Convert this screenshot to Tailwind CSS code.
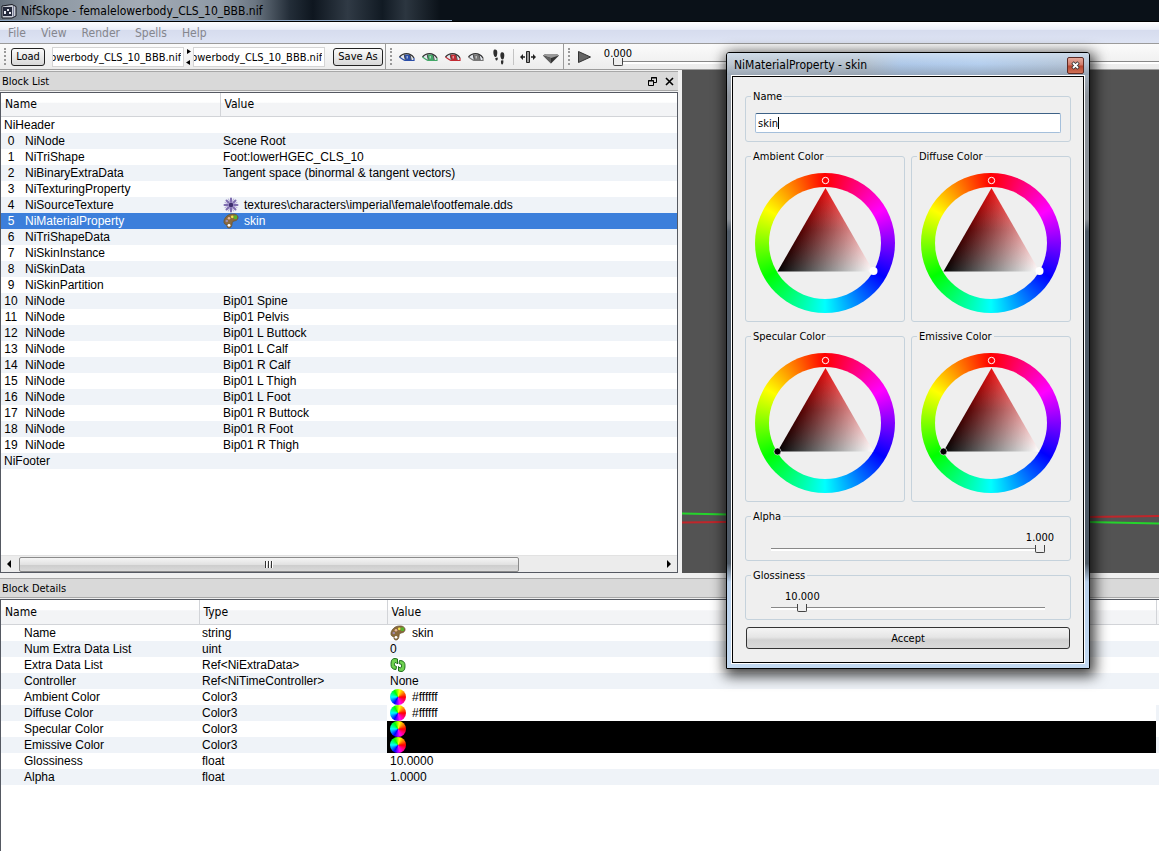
<!DOCTYPE html>
<html lang="en">
<head>
  <meta charset="UTF-8">
  <meta name="viewport" content="width=device-width, initial-scale=1.0">
  <title>NifSkope - femalelowerbody_CLS_10_BBB.nif</title>
  <script src="https://cdn.jsdelivr.net/npm/@tailwindcss/browser@4"></script>
</head>
<body class="h-screen flex flex-col overflow-hidden bg-[#f0f0f0] text-black text-[11px] leading-4 font-['DejaVu_Sans_Condensed','DejaVu_Sans',sans-serif]">

  <!-- Shared icons -->
  <svg class="hidden">
    <symbol id="eye" viewBox="0 0 16 12">
      <path d="M1 6C4 2 11 1 15 7L14.500 9.500H6.500C4 9 2.500 7.800 1 6Z" fill="#e4e8ee" />
      <path d="M5.500 3.500h5.500L12 9H7C5.500 7.500 5 5.500 5.500 3.500Z" fill="currentColor" />
      <path d="M7.500 5h1.500v2.500H7.500z" fill="#fff" opacity=".5" />
      <path d="M.5 6C4 1.800 11 1 15 7" fill="none" stroke="#333" stroke-width="1.300" />
      <path d="M.5 6C3 8 5 9.500 7 9.500h8V7" fill="none" stroke="currentColor" stroke-width="1.200" />
      <path d="M5.200 3.500 6.300 9M11 3.500 12.300 9" fill="none" stroke="#333" stroke-width=".8" />
    </symbol>
    <symbol id="palette" viewBox="0 0 16 16">
      <path d="M1 8C1.500 4.500 5 1 9.500 1c3.500-.3 5.800 1.500 5.500 4-.3 2-2 2.700-4 3-1.800.3-1.800 1.500-2 3-.2 2-.8 4-3 4S4 13 4 11.800C2 11.500.7 10.500 1 8Z" fill="#8a6a3c" stroke="#6b5330" stroke-width=".8" />
      <circle cx="3.800" cy="8" r="1.300" fill="#a08aa8" />
      <circle cx="6" cy="5.200" r="1.300" fill="#e9b79a" />
      <circle cx="9.300" cy="3.800" r="1.400" fill="#f3e04a" />
      <path d="M10.500 2.500h3.500v3.500h-3z" fill="#58b32b" />
      <circle cx="6" cy="12.300" r="1.400" fill="#fff" />
    </symbol>
    <symbol id="flower" viewBox="0 0 16 16">
      <g stroke="#7d6cae" stroke-width="2" stroke-linecap="round">
        <path d="M8 1.500v13M1.500 8h13M3.500 3.500l9 9M12.500 3.500l-9 9" />
      </g>
      <g stroke="#b3a8d6" stroke-width="1" stroke-linecap="round">
        <path d="M5.500 2l5 12M10.500 2l-5 12M2 5.500l12 5M2 10.500l12-5" />
      </g>
      <circle cx="8" cy="8" r="2.200" fill="#3d2f6d" />
    </symbol>
    <symbol id="reload" viewBox="0 0 16 16">
      <path id="half" d="M1 7.500C1 3.500 2 1.500 5 1.500L7.500 2V7L6 5.500C4.500 5.500 4.300 6.500 4.500 8.500L6.500 9.500 6 12.500C2.500 12.500 1 10.500 1 7.500Z" fill="#6fd350" stroke="#1d6e1d" />
      <path d="M15 8.500C15 12.500 14 14.500 11 14.500L8.500 14V9.500L10 11C11.500 11 11.700 9.500 11.500 7.500L9 6.500 9.500 3.500C13.500 3.500 15 5.500 15 8.500Z" fill="#6fd350" stroke="#1d6e1d" />
    </symbol>
  </svg>

  <!-- Title bar -->
  <header class="relative h-[22px] shrink-0 flex items-center gap-1 pl-px border-b border-black bg-[linear-gradient(90deg,#66717d,#8d98a3_4%,#a3abb5_12%,#8e99a5_19%,#6b7682_22%,#232d38_25%,#0e161f_27%,#303a45_30%,#111a23_33%,#2c3640_35%,#0a1118_38%)]">
    <svg class="size-4" viewBox="0 0 16 16">
      <path d="M1 3l10-1.500 4 2V13l-4 2H1z" fill="#c9cdd6" stroke="#15171f" />
      <path d="M2 4h9v9H2z" fill="#252a3c" />
      <path d="M3 8h2v3H3zM6 6h2v2H6zM8 9h2v2H8z" fill="#e8eaf2" />
      <path d="M12.500 3v11" stroke="#7b7f99" />
    </svg>
    <h1 class="text-[12px]">NifSkope - femalelowerbody_CLS_10_BBB.nif</h1>
    <div class="absolute bottom-0 left-0 w-[39%] h-px bg-[#8ea6c4]"></div>
  </header>

  <!-- Menu -->
  <nav class="h-[21px] shrink-0 flex items-center gap-[15px] px-2 text-[12px] text-[#85868d] bg-[linear-gradient(#fdfdfe,#eceff8_35%,#d6dcee_40%,#dee4f4)]">
    <a href="#">File</a>
    <a href="#">View</a>
    <a href="#">Render</a>
    <a href="#">Spells</a>
    <a href="#">Help</a>
  </nav>

  <!-- Toolbar -->
  <div class="h-[27px] shrink-0 flex items-center border-y border-[#9b9b9b] bg-[linear-gradient(#fbfbfb,#ececec)]">
    <div class="w-[3px] h-[17px] ml-1 mr-1 border-l-2 border-dotted border-[#999]"></div>
    <button class="w-[34px] h-[18px] pt-px leading-3 border border-[#222] rounded-[3px] bg-[linear-gradient(#fafafa,#d8d8d8)]">Load</button>
    <input aria-label="Load file" class="file w-[132px] h-5 ml-[7px] pt-px pr-[2px] bg-white border border-[#d5d5d5] outline-none" value="C:\meshes\femalelowerbody_CLS_10_BBB.nif">
    <svg class="w-[5px] h-4 mx-[2px]" viewBox="0 0 5 16"><path d="M1 0v5l4-2.500zM4 11v5L0 13.500z" /></svg>
    <input aria-label="Save file" class="file w-[132px] h-5 pt-px pr-[2px] bg-white border border-[#d5d5d5] outline-none" value="C:\meshes\femalelowerbody_CLS_10_BBB.nif">
    <button class="w-[50px] h-[18px] ml-2 pt-px leading-3 border border-[#222] rounded-[3px] bg-[linear-gradient(#fafafa,#d8d8d8)]">Save As</button>
    <div class="w-px h-full ml-[2px] bg-[#9b9b9b]"></div>
    <div class="w-[3px] h-[17px] ml-1 border-l-2 border-dotted border-[#999]"></div>
    <div class="flex items-center gap-[7px] ml-[6px]">
      <button aria-label="Draw axes" class="text-[#2b4ea8]"><svg class="w-4 h-3"><use href="#eye" /></svg></button>
      <button aria-label="Draw nodes" class="text-[#43a868]"><svg class="w-4 h-3"><use href="#eye" /></svg></button>
      <button aria-label="Draw havok" class="text-[#c22a33]"><svg class="w-4 h-3"><use href="#eye" /></svg></button>
      <button aria-label="Show hidden" class="text-[#777]"><svg class="w-4 h-3"><use href="#eye" /></svg></button>
      <button aria-label="Walk">
        <svg class="size-4" viewBox="0 0 16 16" fill="#2e2e2e">
          <path d="M3 .800c2-.8 3.400.5 3.300 2.900C6.200 6 5.800 8.200 4.300 8 2.700 7.700 1.600 2.500 3 .800ZM4.300 9l2.400-.4c.3 1.900-.3 3-1.100 3s-1.300-1.100-1.300-2.600Z" />
          <path d="M10 3.700c1.900-1 3.400 0 3.300 2.800-.1 2.200-.6 4.100-1.900 4C9.700 10.300 8.600 5.500 10 3.700ZM10 11.500l2.300-.3c.3 2.300-.2 4.300-1.200 4.300s-1.300-2-1.100-4Z" />
        </svg>
      </button>
    </div>
    <div class="w-px h-4 ml-[6px] bg-[#c4c4c4]"></div>
    <button aria-label="Flip view" class="ml-[6px]">
      <svg class="size-4" viewBox="0 0 16 16">
        <path d="M6.500 2.500h3v11h-3z" fill="#999" stroke="#222" />
        <path d="M0 8l3-3v2.300h2v1.400H3V11zM16 8l-3-3v2.300h-2v1.400h2V11z" fill="#222" />
      </svg>
    </button>
    <button aria-label="Perspective" class="ml-[7px]">
      <svg class="size-4" viewBox="0 0 16 16">
        <path d="M0 6.500 2.500 5h11L16 6.500 8 14.500z" fill="#333" />
        <path d="M0 6.500 2.500 5h11L16 6.500 8 9z" fill="#999" />
        <path d="M0 6.500 8 9v5.500z" fill="#606060" />
      </svg>
    </button>
    <div class="w-px h-full ml-1 bg-[#9b9b9b]"></div>
    <div class="w-[3px] h-[17px] ml-1 border-l-2 border-dotted border-[#999]"></div>
    <button aria-label="Play" class="ml-[7px]">
      <svg class="w-[13px] h-3" viewBox="0 0 13 12"><path d="M.5.500v11L12.500 6z" fill="#666" stroke="#333" /></svg>
    </button>
    <div class="relative flex-1 ml-[22px] pt-3">
      <output class="absolute left-[5px] bottom-2 -translate-x-1/2 leading-3">0.000</output>
      <input type="range" aria-label="Time" min="0" max="1" step="0.001" value="0" class="block w-full h-[10px] appearance-none bg-transparent [&::-webkit-slider-runnable-track]:h-[3px] [&::-webkit-slider-runnable-track]:border-t [&::-webkit-slider-runnable-track]:border-[#888] [&::-webkit-slider-runnable-track]:bg-white [&::-webkit-slider-thumb]:appearance-none [&::-webkit-slider-thumb]:w-[10px] [&::-webkit-slider-thumb]:h-2 [&::-webkit-slider-thumb]:-mt-1 [&::-webkit-slider-thumb]:border [&::-webkit-slider-thumb]:border-t-0 [&::-webkit-slider-thumb]:border-[#444] [&::-webkit-slider-thumb]:rounded-b-[2px] [&::-webkit-slider-thumb]:bg-[#eee]">
    </div>
  </div>

  <!-- Block list and viewport -->
  <main class="flex-[503] min-h-0 flex">
    <section class="w-[58.5%] flex flex-col">
      <div class="h-5 shrink-0 mt-px mb-px pt-px flex items-center justify-between pl-[2px] pr-1 border-y border-[#a8a8a8] bg-[#d9d9d9]">
        <h2>Block List</h2>
        <div class="flex items-center gap-2">
          <button aria-label="Float"><svg class="size-[9px]" viewBox="0 0 9 9" fill="none" stroke="#000"><path d="M3.500 3V.5h5v5H6M3 1h6M.5 3.500h5v5h-5zM0 4h6" /></svg></button>
          <button aria-label="Close"><svg class="size-[9px]" viewBox="0 0 9 9" stroke="#000" stroke-width="1.600"><path d="M1 1l7 7M8 1 1 8" /></svg></button>
        </div>
      </div>
      <div class="flex-1 min-h-0 flex flex-col border border-[#555962] bg-white">
        <table class="w-full table-fixed border-collapse text-left font-['Liberation_Sans',Arial,sans-serif] text-[12px]">
          <thead class="font-['DejaVu_Sans_Condensed','DejaVu_Sans',sans-serif]">
            <tr class="h-[23px] bg-[linear-gradient(#fff_40%,#f3f4f6_45%,#f3f4f6)]">
              <th class="w-[219px] pl-1 p-0 font-normal border-b border-r border-[#d2d4d8]">Name</th>
              <th class="pl-1 p-0 font-normal border-b border-[#d2d4d8]">Value</th>
            </tr>
          </thead>
          <tbody id="blocks"></tbody>
        </table>
        <!-- Horizontal scrollbar -->
        <div class="h-[17px] shrink-0 mt-auto flex items-center bg-[#ececec] border-t border-[#e2e2e2]">
          <svg class="w-[18px] h-2" viewBox="0 0 18 8"><path d="M10 0v8L6 4z" /></svg>
          <div class="w-[74%] h-[15px] flex items-center justify-center gap-px border border-[#8b8b8b] rounded-[2px] bg-[linear-gradient(#f5f5f5,#e2e2e2_50%,#cdcdcd_55%,#d9d9d9)]">
            <i class="w-[2px] h-[7px] border-l border-[#333] bg-white"></i>
            <i class="w-[2px] h-[7px] border-l border-[#333] bg-white"></i>
            <i class="w-[2px] h-[7px] border-l border-[#333] bg-white"></i>
          </div>
          <svg class="w-[18px] h-2 ml-auto" viewBox="0 0 18 8"><path d="M8 0v8l4-4z" /></svg>
        </div>
      </div>
    </section>
    <svg class="flex-1 h-full ml-1 bg-[#535353]" viewBox="0 0 477 503" preserveAspectRatio="none" fill="none" stroke-width="2">
      <path d="M0 452.500 477 446" stroke="#c0262b" />
      <path d="M0 443.500 477 453.500" stroke="#25d32c" />
    </svg>
  </main>

  <!-- Block details -->
  <section class="flex-[273] min-h-0 flex flex-col pt-[5px]">
    <div class="h-5 shrink-0 mb-px pt-px flex items-center pl-[2px] border-y border-[#a8a8a8] bg-[#d9d9d9]">
      <h2>Block Details</h2>
    </div>
    <div class="flex-1 min-h-0 border-t border-l border-[#555962] bg-white">
      <table class="w-full table-fixed border-collapse text-left font-['Liberation_Sans',Arial,sans-serif] text-[12px]">
        <thead class="font-['DejaVu_Sans_Condensed','DejaVu_Sans',sans-serif]">
          <tr class="h-6 bg-[linear-gradient(#fff_40%,#f3f4f6_45%,#f3f4f6)]">
            <th class="w-[198px] pl-1 p-0 font-normal border-b border-r border-[#d2d4d8]">Name</th>
            <th class="w-[188px] pl-1 p-0 font-normal border-b border-r border-[#d2d4d8]">Type</th>
            <th class="pl-1 p-0 font-normal border-b border-r border-[#d2d4d8]">Value</th>
            <th class="w-[3px] p-0 border-b border-[#d2d4d8]"></th>
          </tr>
        </thead>
        <tbody id="details"></tbody>
      </table>
    </div>
  </section>

  <!-- Material dialog -->
  <div role="dialog" aria-labelledby="dialogTitle" class="absolute left-[726px] top-[52px] w-[364px] px-1 pb-1 border border-black rounded-t-[3px] shadow-[2px_4px_14px_3px_rgba(0,0,0,0.75)] bg-[linear-gradient(#b5c5d6,#8f959d_7%,#8d9299_27%,#505b67_29%,#505b67_83%,#b9d0ea_86%,#c3d9f1)]">
    <div class="h-[22px] -mx-1 pl-[7px] pr-[5px] flex items-center justify-between rounded-t-[2px] bg-[linear-gradient(#d9e6f4aa,#ffffff00_50%,#7f8c9c88),linear-gradient(90deg,#bdc7d1,#b3bfcb_38%,#aec8e8_48%,#b5cfee_70%,#b4c2d2)]">
      <h2 id="dialogTitle" class="pt-[2px] text-[12px]">NiMaterialProperty - skin</h2>
      <button aria-label="Close dialog" class="w-[17px] h-[17px] mt-[2px] flex items-center justify-center border border-[#5c2a24] rounded-[2px] bg-[linear-gradient(#e5a99b,#cf7867_48%,#b5442f_52%,#cf7055)]">
        <svg class="size-[9px]" viewBox="0 0 9 9"><path d="M1.500 1.500l6 6M7.500 1.500l-6 6" stroke="#333" stroke-width="3.400" /><path d="M2 2l5 5M7 2 2 7" stroke="#fff" stroke-width="1.800" /></svg>
      </button>
    </div>
    <div class="border border-white">
      <form class="flex flex-col gap-[7px] p-3 pb-[13px] border border-black bg-[#efefef]">
        <fieldset class="px-[9px] pt-[10px] pb-2 border border-[#c5d2dc] rounded-[3px]">
          <legend class="ml-[-4px] px-[2px] pt-[2px] leading-3"><label for="matName">Name</label></legend>
          <div class="relative">
            <input id="matName" value="skin" class="block w-full h-5 px-[2px] bg-white border border-[#a4bfdb] border-t-[#3d6186] rounded-[2px] outline-none">
            <!-- text caret -->
            <i class="absolute left-[23px] top-1 w-px h-3 bg-black"></i>
          </div>
        </fieldset>
        <div id="wheels" class="grid grid-cols-2 gap-x-[6px] gap-y-[7px]"></div>
        <div id="sliders" class="flex flex-col gap-[7px]"></div>
        <button type="button" class="h-[22px] mx-px pt-px border border-[#333] rounded-[3px] bg-[linear-gradient(#f4f4f4,#e6e6e6_45%,#d2d2d2_60%,#dadada)]">Accept</button>
      </form>
    </div>
  </div>

  <script>
    const icon = (name) => `<svg class="size-4 shrink-0"><use href="#${name}" /></svg>`;
    const wheelIcon = `<i class="size-4 shrink-0 rounded-full bg-[conic-gradient(from_15deg,#ff0,#f00_75deg,#f0f_150deg,#00f_195deg,#0ff_255deg,#0f0_315deg,#ff0)]"></i>`;

    const blocks = [
      ['', 'NiHeader', ''],
      [0, 'NiNode', 'Scene Root'],
      [1, 'NiTriShape', 'Foot:lowerHGEC_CLS_10'],
      [2, 'NiBinaryExtraData', 'Tangent space (binormal &amp; tangent vectors)'],
      [3, 'NiTexturingProperty', ''],
      [4, 'NiSourceTexture', 'textures\\characters\\imperial\\female\\footfemale.dds', 'flower'],
      [5, 'NiMaterialProperty', 'skin', 'palette'],
      [6, 'NiTriShapeData', ''],
      [7, 'NiSkinInstance', ''],
      [8, 'NiSkinData', ''],
      [9, 'NiSkinPartition', ''],
      [10, 'NiNode', 'Bip01 Spine'],
      [11, 'NiNode', 'Bip01 Pelvis'],
      [12, 'NiNode', 'Bip01 L Buttock'],
      [13, 'NiNode', 'Bip01 L Calf'],
      [14, 'NiNode', 'Bip01 R Calf'],
      [15, 'NiNode', 'Bip01 L Thigh'],
      [16, 'NiNode', 'Bip01 L Foot'],
      [17, 'NiNode', 'Bip01 R Buttock'],
      [18, 'NiNode', 'Bip01 R Foot'],
      [19, 'NiNode', 'Bip01 R Thigh'],
      ['', 'NiFooter', '']
    ];

    document.getElementById('blocks').innerHTML = blocks.map(([id, name, value, pic]) => `
      <tr class="h-4 ${id === 5 ? 'bg-[#3c7fdb] text-white' : 'even:bg-[#eff3f8]'}">
        <td class="p-0 pl-[3px]">
          <div class="flex h-4">${id === '' ? '' : `<span class="w-[14px] mr-[7px] text-center">${id}</span>`}${name}</div>
        </td>
        <td class="p-0 pl-[3px]">
          <div class="flex h-4 gap-[5px]">${pic ? icon(pic) : ''}${value}</div>
        </td>
      </tr>`).join('');

    const details = [
      ['Name', 'string', 'skin', icon('palette'), ''],
      ['Num Extra Data List', 'uint', '0', '', ''],
      ['Extra Data List', 'Ref&lt;NiExtraData&gt;', '', icon('reload'), ''],
      ['Controller', 'Ref&lt;NiTimeController&gt;', 'None', '', ''],
      ['Ambient Color', 'Color3', '#ffffff', wheelIcon, 'bg-white'],
      ['Diffuse Color', 'Color3', '#ffffff', wheelIcon, 'bg-white'],
      ['Specular Color', 'Color3', '#000000', wheelIcon, 'bg-black'],
      ['Emissive Color', 'Color3', '#000000', wheelIcon, 'bg-black'],
      ['Glossiness', 'float', '10.0000', '', ''],
      ['Alpha', 'float', '1.0000', '', '']
    ];

    document.getElementById('details').innerHTML = details.map(([name, type, value, pic, bg]) => `
      <tr class="h-4 even:bg-[#eff3f8]">
        <td class="p-0 pl-[23px]">${name}</td>
        <td class="p-0 pl-[3px]">${type}</td>
        <td class="p-0 pl-[3px] ${bg}">
          <div class="flex h-4 gap-[6px]">${pic}${bg === 'bg-black' ? '' : `<span>${value}</span>`}</div>
        </td>
        <td class="p-0"></td>
      </tr>`).join('');

    // hue ring with the saturation/value triangle inside
    const wheels = [['Ambient', true], ['Diffuse', true], ['Specular', false], ['Emissive', false]];
    document.getElementById('wheels').innerHTML = wheels.map(([name, white]) => `
      <fieldset class="pt-[10px] pb-2 border border-[#c5d2dc] rounded-[3px]">
        <legend class="ml-[5px] px-[2px] pt-[2px] leading-3">${name} Color</legend>
        <div class="size-[140px] mx-auto p-[14px] rounded-full bg-[conic-gradient(#f00,#f0f,#00f,#0ff,#0f0,#ff0,#f00)]">
          <div class="size-full rounded-full bg-[#efefef]">
            <svg class="size-[140px] -m-[14px] overflow-visible absolute" viewBox="0 0 140 140" role="img" aria-label="${name} color wheel">
              <defs>
                <linearGradient id="r${name}" gradientUnits="userSpaceOnUse" x1="0" y1="98" x2="0" y2="15">
                  <stop stop-color="#000" /><stop offset=".5" stop-color="#540000" /><stop offset="1" stop-color="#e60f0f" />
                </linearGradient>
                <linearGradient id="w${name}" gradientUnits="userSpaceOnUse" x1="46" y1="56.500" x2="118" y2="98">
                  <stop stop-color="#000" /><stop offset="1" stop-color="#fff" />
                </linearGradient>
                <clipPath id="t${name}"><path d="M70.500 15 22.500 98.500h96z" /></clipPath>
              </defs>
              <g clip-path="url(#t${name})" class="isolate">
                <path d="M20 10h101v90H20z" fill="url(#r${name})" />
                <path d="M20 10h101v90H20z" fill="url(#w${name})" class="mix-blend-plus-lighter" />
              </g>
              <circle cx="70.500" cy="7.500" r="3.200" fill="none" stroke="#fff" />
              ${white
                ? '<circle cx="118.500" cy="98" r="4" fill="#fff" />'
                : '<circle cx="22.500" cy="98.500" r="3.500" fill="#000" stroke="#fff" stroke-opacity=".6" />'}
            </svg>
          </div>
        </div>
      </fieldset>`).join('');

    const sliders = [['Alpha', 1, 1], ['Glossiness', 10, 100]];
    document.getElementById('sliders').innerHTML = sliders.map(([name, value, max]) => `
      <fieldset class="px-[25px] pt-[21px] pb-[6px] border border-[#c5d2dc] rounded-[3px]">
        <legend class="ml-[-20px] px-[2px] pt-[2px] leading-3"><label for="s${name}">${name}</label></legend>
        <div class="relative">
          <output class="absolute bottom-full -translate-x-1/2 leading-3" style="left: calc(5px + (100% - 10px) * ${value / max})">${value.toFixed(3)}</output>
          <input type="range" id="s${name}" min="0" max="${max}" step="0.001" value="${value}" class="block w-full h-[10px] appearance-none bg-transparent [&::-webkit-slider-runnable-track]:h-[3px] [&::-webkit-slider-runnable-track]:border-t [&::-webkit-slider-runnable-track]:border-[#888] [&::-webkit-slider-runnable-track]:bg-white [&::-webkit-slider-thumb]:appearance-none [&::-webkit-slider-thumb]:w-[10px] [&::-webkit-slider-thumb]:h-2 [&::-webkit-slider-thumb]:-mt-1 [&::-webkit-slider-thumb]:border [&::-webkit-slider-thumb]:border-t-0 [&::-webkit-slider-thumb]:border-[#444] [&::-webkit-slider-thumb]:rounded-b-[2px] [&::-webkit-slider-thumb]:bg-[#eee]">
        </div>
      </fieldset>`).join('');

    // long paths show their file name end
    document.querySelectorAll('.file').forEach((el) => { el.scrollLeft = el.scrollWidth; });
  </script>

</body>
</html>
